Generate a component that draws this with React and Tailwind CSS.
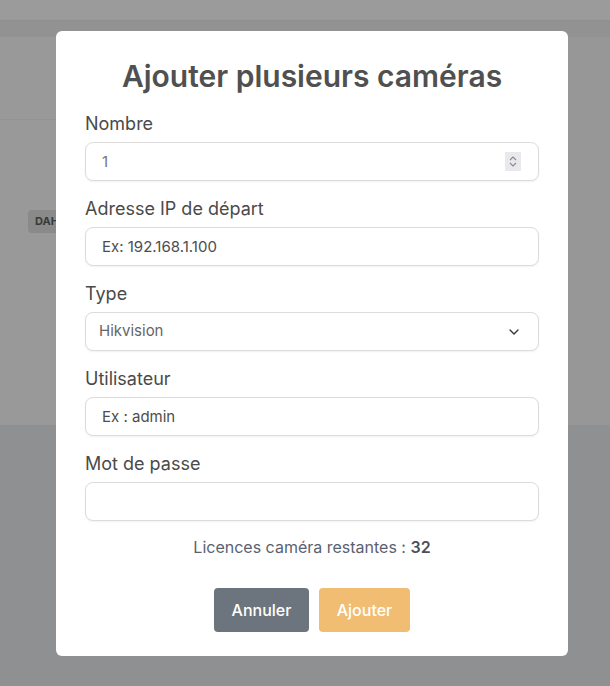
import { useState } from "react";
import { ChevronDown } from "lucide-react";

const labelCls =
  "block text-lg leading-7 font-normal text-[#4a4a4a] mb-1";
const inputCls =
  "w-full h-[39px] px-4 rounded-lg border border-[#dcdcdc] bg-white text-[15px] text-[#444] placeholder:text-[#4d4d4d] shadow-[0_1px_2px_rgba(0,0,0,0.06)] focus:outline-none";

const Field = ({ label, children }) => (
  <div className="mb-[14px]">
    <label className={labelCls}>{label}</label>
    {children}
  </div>
);

const App = () => {
  const [form, setForm] = useState({
    nombre: "1",
    ip: "",
    type: "Hikvision",
    user: "",
    password: "",
  });

  const handleChange = (e) => {
    const { name, value } = e.target;
    setForm((prev) => ({ ...prev, [name]: value }));
  };

  return (
    <div
      className="relative w-[610px] h-[686px] overflow-hidden bg-[#999999]"
      style={{ fontFamily: "Inter, 'Noto Sans', sans-serif" }}
    >
      {/* Page behind the overlay */}
      <div className="h-[21px] bg-[#9b9b9b] border-b border-[#8f8f8f]" />
      <div className="h-[16px] bg-[#929292]" />
      <div className="flex h-[388px]">
        <div className="flex-1 flex flex-col">
          <div className="h-[83px] border-b border-[#939393]" />
          <div className="pt-[87px] pl-[28px]">
            <span className="inline-block px-[7px] py-[3px] rounded bg-[#8a8a8a] text-[11px] font-bold text-[#3a3a3a]">
              DAHUA
            </span>
          </div>
        </div>
        <div className="w-[42px] bg-[#979797]" />
      </div>
      <div className="h-[261px] bg-[#8f9091]" />

      {/* Modal */}
      <div className="absolute left-[56px] top-[31px] w-[512px] h-[625px] bg-white rounded-md px-[29px] pt-[26px]">
        <h2 className="text-center text-[30px] leading-[38px] font-semibold text-[#505050] mb-[15px]">
          Ajouter plusieurs caméras
        </h2>

        <form onSubmit={(e) => e.preventDefault()}>
          <Field label="Nombre">
            <div className="relative">
              <input
                type="text"
                name="nombre"
                value={form.nombre}
                onChange={handleChange}
                className={`${inputCls} text-[#777]`}
              />
              <div className="absolute right-[18px] top-[10px] w-[16px] h-[19px] bg-[#e9e9ed] flex flex-col items-center justify-center gap-[1px]">
                <svg width="8" height="5" viewBox="0 0 8 5" fill="none">
                  <path d="M1 4L4 1L7 4" stroke="#8a8a8a" strokeWidth="1.1" />
                </svg>
                <svg width="8" height="5" viewBox="0 0 8 5" fill="none">
                  <path d="M1 1L4 4L7 1" stroke="#8a8a8a" strokeWidth="1.1" />
                </svg>
              </div>
            </div>
          </Field>

          <Field label="Adresse IP de départ">
            <input
              type="text"
              name="ip"
              value={form.ip}
              onChange={handleChange}
              placeholder="Ex: 192.168.1.100"
              className={inputCls}
            />
          </Field>

          <Field label="Type">
            <div className="relative">
              <select
                name="type"
                value={form.type}
                onChange={handleChange}
                className={`${inputCls} appearance-none px-[13px] text-[14px] text-[#666]`}
              >
                <option>Hikvision</option>
                <option>Dahua</option>
                <option>Axis</option>
              </select>
              <ChevronDown
                size={16}
                strokeWidth={2}
                className="absolute right-[17px] top-[12px] text-[#333] pointer-events-none"
              />
            </div>
          </Field>

          <Field label="Utilisateur">
            <input
              type="text"
              name="user"
              value={form.user}
              onChange={handleChange}
              placeholder="Ex : admin"
              className={inputCls}
            />
          </Field>

          <Field label="Mot de passe">
            <input
              type="password"
              name="password"
              value={form.password}
              onChange={handleChange}
              className={inputCls}
            />
          </Field>

          <p className="text-center text-base leading-6 text-[#5a6170] mt-[10px]">
            Licences caméra restantes :{" "}
            <span className="font-semibold text-[#4a5060]">32</span>
          </p>

          <div className="flex justify-center gap-[10px] mt-[29px]">
            <button
              type="button"
              className="w-[95px] h-[44px] rounded bg-[#6c757d] text-white text-base font-medium"
            >
              Annuler
            </button>
            <button
              type="submit"
              className="w-[91px] h-[44px] rounded bg-[#f0bd72] text-white text-base font-medium"
            >
              Ajouter
            </button>
          </div>
        </form>
      </div>
    </div>
  );
};

export default App;
